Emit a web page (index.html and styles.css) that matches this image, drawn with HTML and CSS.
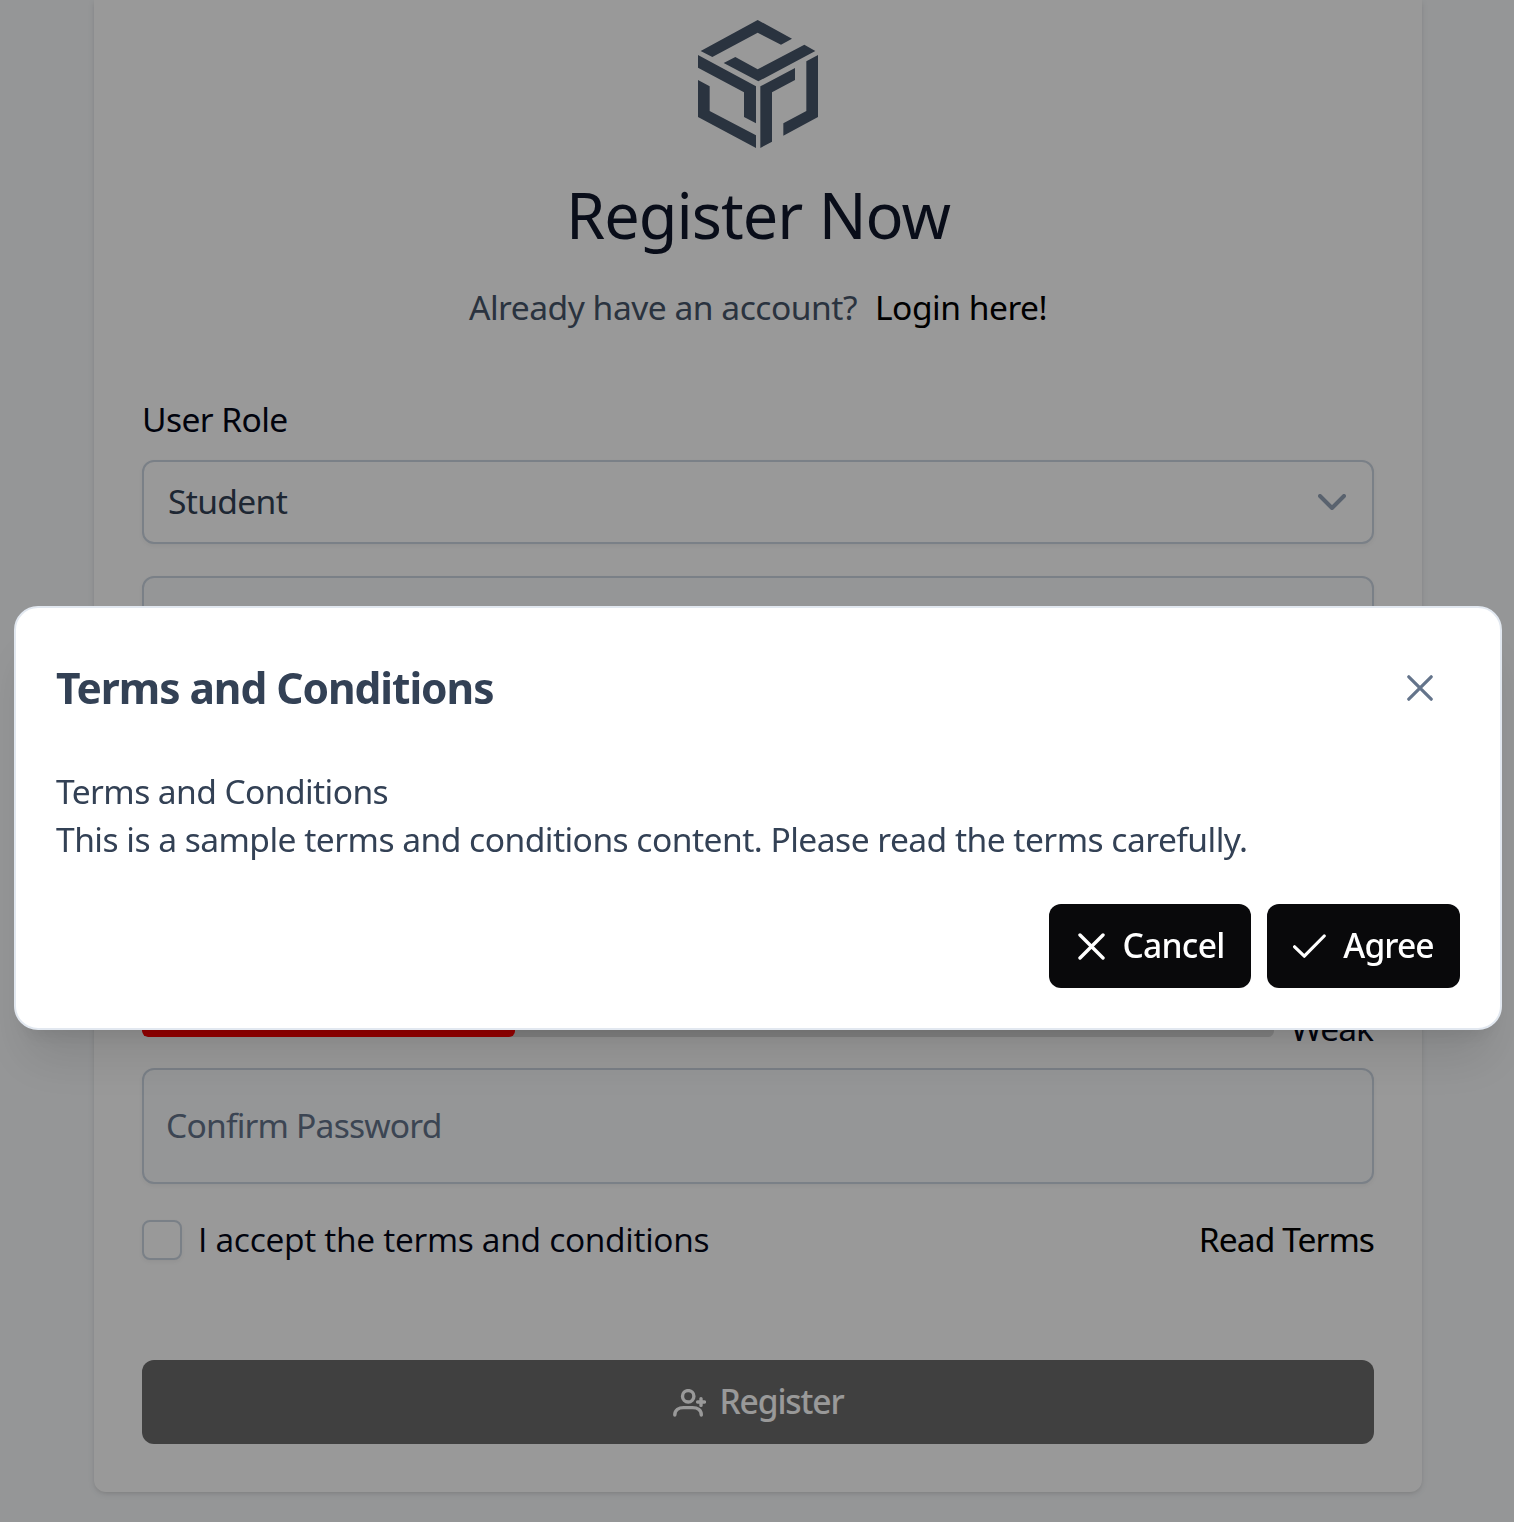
FILE: index.html
```html
<!DOCTYPE html>
<html lang="en">
<head>
<meta charset="utf-8">
<meta name="viewport" content="width=device-width, initial-scale=1">
<title>Register Now</title>
<link rel="stylesheet" href="styles.css">
</head>
<body>
<main class="card">
  <svg class="logo" viewBox="54 60 360 384" fill="currentColor" aria-hidden="true">
    <path d="M62 153 233 60 336 116 303 134 233 98 97 171Z"/>
    <path d="M131 189 166 171 233 208 373 134 406 153 235 244Z"/>
    <path d="M54 165 228 259V370L192 351V277L54 203Z"/>
    <path d="M54 240 89 259V333L228 406V444L54 351Z"/>
    <path d="M241 259 345 204V240L276 277V425L241 444Z"/>
    <path d="M379 184 414 165V351L310 407V370L379 333Z"/>
  </svg>
  <h1 class="title">Register Now</h1>
  <p class="subtitle"><span class="prompt">Already have an account?</span><a class="login">Login here!</a></p>

  <form class="form">
    <label class="label">User Role</label>
    <div class="field select">
      <span class="select-value">Student</span>
      <svg class="chevron" viewBox="0 0 28 16" fill="none" stroke="currentColor" stroke-width="4" stroke-linecap="round" stroke-linejoin="round"><path d="M2 2 14 14 26 2"/></svg>
    </div>
    <div class="field filled"></div>
    <div class="field filled"></div>
    <div class="field filled"></div>
    <div class="strength">
      <div class="track"><div class="level"></div></div>
      <span class="strength-text">Weak</span>
    </div>
    <div class="field filled confirm"><span class="placeholder">Confirm Password</span></div>
    <div class="terms-row">
      <span class="checkbox"></span>
      <span class="accept">I accept the terms and conditions</span>
      <a class="read">Read Terms</a>
    </div>
    <button class="button register" type="button">
      <svg class="icon-user" viewBox="0 0 33 28" fill="none" stroke="currentColor" stroke-width="3.4" stroke-linecap="round"><circle cx="15.200" cy="7.300" r="5.700"/><path d="M1.800 26C1.800 21 6 18.600 10.500 18.600H19.500C24.500 18.600 28.300 21 28.300 26M24.600 13h6.800M28 9.600v6.800"/></svg>
      <span class="button-text">Register</span>
    </button>
  </form>
</main>

<div class="overlay">
  <section class="dialog" role="dialog" aria-label="Terms and Conditions">
    <header class="dialog-header">
      <h2 class="dialog-title">Terms and Conditions</h2>
      <svg class="close" viewBox="0 0 26 26" fill="none" stroke="currentColor" stroke-width="3.200" stroke-linecap="round"><path d="M1.800 1.800 24.200 24.200M24.200 1.800 1.800 24.200"/></svg>
    </header>
    <div class="dialog-body">
      <p class="body-heading">Terms and Conditions</p>
      <p class="body-copy">This is a sample terms and conditions content. Please read the terms carefully.</p>
    </div>
    <footer class="dialog-footer">
      <button class="button cancel" type="button">
        <svg class="icon-x" viewBox="0 0 27 27" fill="none" stroke="currentColor" stroke-width="3.400" stroke-linecap="round"><path d="M2 2 25 25M25 2 2 25"/></svg>
        <span class="button-text">Cancel</span>
      </button>
      <button class="button agree" type="button">
        <svg class="icon-check" viewBox="0 0 33 24" fill="none" stroke="currentColor" stroke-width="3.200" stroke-linecap="round" stroke-linejoin="round"><path d="M1.600 12.800 11.300 22.200 31.200 2"/></svg>
        <span class="button-text">Agree</span>
      </button>
    </footer>
  </section>
</div>
</body>
</html>
```
FILE: styles.css
```css
* { box-sizing: border-box; }

html { overflow: hidden; background: #f8fafc; }

body {
  margin: 0;
  width: 1516px;
  height: 1522px;
  overflow: hidden;
  background: #f8fafc;
  font: 400 33.6px/48px "Noto Sans", "Open Sans", sans-serif;
  color: #020617;
}

h1, h2, p { margin: 0; }
span, a { white-space: nowrap; }

.card {
  display: flex;
  flex-direction: column;
  width: 1328px;
  margin: 0 auto;
  padding: 20px 48px 48px;
  background: #fff;
  border-radius: 0 0 12px 12px;
  box-shadow: 0 2px 6px rgba(0, 0, 0, .1), 0 2px 4px -2px rgba(0, 0, 0, .1);
}

.logo { width: 120px; height: 128px; align-self: center; color: #475569; }

.title {
  margin-top: 31px;
  font-size: 63px;
  line-height: 72px;
  font-weight: 400;
  letter-spacing: -1px;
  word-spacing: 1px;
  text-align: center;
  color: #0f172a;
}

.subtitle { display: flex; justify-content: center; gap: 18px; margin-top: 32px; }
.prompt { color: #475569; letter-spacing: -.49px; }
.login { color: #000; letter-spacing: -.5px; }

.form { display: flex; flex-direction: column; margin-top: 64px; }
.label { letter-spacing: -.6px; }

.field {
  display: flex;
  align-items: center;
  height: 116px;
  margin-top: 32px;
  border: 2px solid #cbd5e1;
  border-radius: 12px;
  box-shadow: 0 2px 4px rgba(18, 18, 23, .05);
}
.filled { background: #f8fafc; }

.select {
  justify-content: space-between;
  height: 84px;
  margin-top: 17px;
  padding: 0 26px 0 24px;
  background: #fff;
}
.select-value { padding-bottom: 2px; color: #334155; letter-spacing: -.66px; }
.chevron { width: 28px; height: 16px; color: #94a3b8; }

.strength { display: flex; align-items: center; gap: 17px; height: 48px; margin-top: 16px; }
.track { flex: 1; height: 16px; margin-top: 2px; background: #ddd; border-radius: 6px; overflow: hidden; }
.level { width: 33%; height: 100%; background: #f00; border-radius: 6px; }
.strength-text { letter-spacing: -1px; margin-right: 1px; }

.confirm { margin-top: 16px; padding-left: 22px; }
.placeholder { padding-bottom: 2px; color: #64748b; letter-spacing: -.8px; }

.terms-row { display: flex; align-items: center; gap: 16px; height: 40px; margin-top: 36px; }
.checkbox {
  width: 40px;
  height: 40px;
  border: 2px solid #cbd5e1;
  border-radius: 8px;
  background: #fff;
  box-shadow: 0 2px 4px rgba(18, 18, 23, .05);
}
/* Open Sans draws the capital I without serifs */
.accept { padding-bottom: 2px; font-family: "Open Sans", "Noto Sans", sans-serif; letter-spacing: -.3px; }
.read { margin-left: auto; padding-bottom: 2px; letter-spacing: -.95px; color: #000; }

.button {
  display: flex;
  align-items: center;
  justify-content: center;
  height: 84px;
  padding: 0;
  border: 0;
  border-radius: 12px;
  background: #09090b;
  color: #fff;
  font: inherit;
  font-weight: 500;
}
.button-text { padding-bottom: 2px; }

.register { gap: 13px; margin-top: 100px; padding-left: 1px; background: #6b6b6b; letter-spacing: -1.1px; }
.icon-user { width: 33px; height: 28px; margin-top: 2px; }

.overlay {
  position: fixed;
  top: 0;
  left: 0;
  display: flex;
  justify-content: center;
  align-items: flex-start;
  width: 1516px;
  height: 1522px;
  padding-top: 606px;
  background: rgba(0, 0, 0, .4);
}

.dialog {
  display: flex;
  flex-direction: column;
  width: 1488px;
  height: 424px;
  padding: 38px 40px;
  border: 2px solid #e2e8f0;
  border-radius: 24px;
  background: #fff;
  color: #334155;
  box-shadow: 0 40px 50px -10px rgba(0, 0, 0, .1), 0 16px 20px -12px rgba(0, 0, 0, .1);
}

.dialog-header { display: flex; justify-content: space-between; align-items: center; height: 84px; padding-right: 27px; }
.dialog-title { font-size: 42.5px; font-weight: 700; letter-spacing: -1.05px; }
.close { width: 26px; height: 26px; color: #64748b; }

.dialog-body { margin-top: 37px; }
.body-heading { letter-spacing: -.59px; }
.body-copy { letter-spacing: -.53px; white-space: nowrap; }

.dialog-footer { display: flex; justify-content: flex-end; gap: 16px; margin-top: 41px; }
.cancel { width: 202px; gap: 17px; padding-left: 3px; letter-spacing: -.7px; }
.agree { width: 193px; gap: 17px; letter-spacing: -.9px; }
.icon-x { width: 27px; height: 27px; }
.icon-check { width: 33px; height: 24px; }
```
